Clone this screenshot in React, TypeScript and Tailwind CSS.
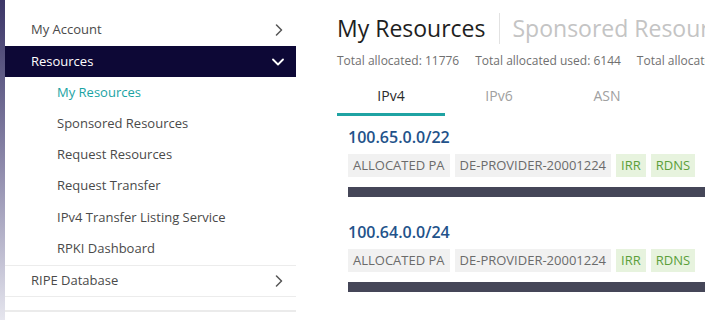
import * as React from 'react';

const subItems = [
    'My Resources',
    'Sponsored Resources',
    'Request Resources',
    'Request Transfer',
    'IPv4 Transfer Listing Service',
    'RPKI Dashboard',
];

const resources = [
    { prefix: '100.65.0.0/22', status: 'ALLOCATED PA', org: 'DE-PROVIDER-20001224' },
    { prefix: '100.64.0.0/24', status: 'ALLOCATED PA', org: 'DE-PROVIDER-20001224' },
    { prefix: '80.43.160.0/21', status: 'ALLOCATED PA', org: 'DE-PROVIDER-20001224' },
];

const ChevronRight: React.FC = () => (
    <svg width="8" height="12" viewBox="0 0 8 12" fill="none">
        <polyline points="1.5,1 6.5,6 1.5,11" stroke="#555" strokeWidth="1.5" strokeLinecap="round" strokeLinejoin="round" />
    </svg>
);

const ChevronDown: React.FC = () => (
    <svg width="12" height="8" viewBox="0 0 12 8" fill="none">
        <polyline points="1,1.5 6,6.5 11,1.5" stroke="#fff" strokeWidth="1.8" strokeLinecap="round" strokeLinejoin="round" />
    </svg>
);

const Sidebar: React.FC = () => (
    <aside className="w-[291px] shrink-0 pt-[14px] text-[13px]">
        <div className="flex h-[31px] items-center justify-between pl-[26px] pr-[13px] text-[#4a4a4a]">
            <span>My Account</span>
            <ChevronRight />
        </div>
        <div className="mt-px flex h-[31px] items-center justify-between bg-[#0d0836] pl-[26px] pr-[12px] text-white">
            <span>Resources</span>
            <ChevronDown />
        </div>
        <ul className="pb-px">
            {subItems.map((item, i) => (
                <li
                    key={item}
                    className={`flex h-[31.2px] items-center pl-[52px] ${i === 0 ? 'text-[#1aa3a3]' : 'text-[#4a4a4a]'}`}
                >
                    {item}
                </li>
            ))}
        </ul>
        <div className="flex h-[32px] items-center justify-between border-y border-[#ececec] pl-[26px] pr-[13px] text-[#4a4a4a]">
            <span>RIPE Database</span>
            <ChevronRight />
        </div>
        <div className="mt-[13px] h-[2px] bg-[#ebebeb]" />
    </aside>
);

const Tag: React.FC<{ label: string; green?: boolean }> = ({ label, green }) => (
    <span
        className={`h-[23px] px-[5px] text-[13px] leading-[23px] ${green ? 'bg-[#e7f3de] text-[#5b9f3a]' : 'bg-[#f1f1f1] text-[#6b6b6b]'}`}
    >
        {label}
    </span>
);

const ResourceItem: React.FC<{ prefix: string; status: string; org: string }> = ({ prefix, status, org }) => (
    <div className="mb-[24px]">
        <div className="text-[16px] font-semibold leading-[22px] text-[#22528a]">{prefix}</div>
        <div className="mt-[6px] flex gap-[5px]">
            <Tag label={status} />
            <Tag label={org} />
            <Tag label="IRR" green />
            <Tag label="RDNS" green />
        </div>
        <div className="mt-[10px] h-[10px] bg-[#454658]" />
    </div>
);

const tabs = ['IPv4', 'IPv6', 'ASN'];

export default function App() {
    return (
        <div
            className="flex h-[320px] w-[705px] overflow-hidden bg-white"
            style={{ fontFamily: '"Open Sans", "Noto Sans", sans-serif' }}
        >
            <div className="w-[5px] shrink-0 bg-linear-to-b from-[#3c3667] via-[#8a86a8] to-[#e6e6ee]" />
            <Sidebar />
            <main className="min-w-0 flex-1 overflow-hidden pl-[41px]">
                <div className="w-[700px]">
                    <div className="mt-[12px] flex items-center whitespace-nowrap text-[23px] leading-[32px]">
                        <span className="text-[#1e1e1e]">My Resources</span>
                        <span className="mx-[13px] h-[31px] w-px bg-[#e2e2e2]" />
                        <span className="text-[#c4c4c4]">Sponsored Resources</span>
                    </div>
                    <div className="mt-[9px] flex gap-4 whitespace-nowrap text-[12px] leading-[16px] text-[#707070]">
                        <span>Total allocated: 11776</span>
                        <span>Total allocated used: 6144</span>
                        <span>Total allocated free: 5632</span>
                    </div>
                    <div className="mt-[9px] flex">
                        {tabs.map((t, i) => (
                            <div
                                key={t}
                                className={`flex h-[38px] w-[108px] items-center justify-center border-b-[3px] text-[14px] ${i === 0 ? 'border-[#1fa3a3] text-[#2a2a2a]' : 'border-transparent text-[#a0a0a0]'}`}
                            >
                                {t}
                            </div>
                        ))}
                    </div>
                    <div className="mt-[10px] pl-[11px]">
                        {resources.map(r => (
                            <ResourceItem key={r.prefix} {...r} />
                        ))}
                    </div>
                </div>
            </main>
        </div>
    );
}
